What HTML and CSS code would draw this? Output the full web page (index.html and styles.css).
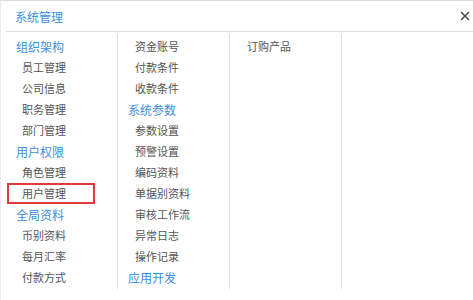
FILE: index.html
```html
<!DOCTYPE html>
<html lang="zh-CN">
<head>
    <meta charset="UTF-8">
    <meta name="viewport" content="width=device-width, initial-scale=1.0">
    <title>系统管理</title>
    <link rel="stylesheet" href="styles.css">
</head>
<body>
    <div class="dialog">
        <div class="dialog-header">
            <span class="dialog-title">系统管理</span>
            <span class="close" title="关闭">
                <svg width="10" height="10" viewBox="0 0 10 10">
                    <path d="M1 1 L9 9 M9 1 L1 9" stroke="#444" stroke-width="1.4" fill="none"/>
                </svg>
            </span>
        </div>

        <div class="menu">
            <div class="menu-col">
                <div class="group">组织架构</div>
                <a class="item">员工管理</a>
                <a class="item">公司信息</a>
                <a class="item">职务管理</a>
                <a class="item">部门管理</a>
                <div class="group">用户权限</div>
                <a class="item">角色管理</a>
                <a class="item marked">用户管理</a>
                <div class="group">全局资料</div>
                <a class="item">币别资料</a>
                <a class="item">每月汇率</a>
                <a class="item">付款方式</a>
            </div>
            <div class="menu-col">
                <a class="item">资金账号</a>
                <a class="item">付款条件</a>
                <a class="item">收款条件</a>
                <div class="group">系统参数</div>
                <a class="item">参数设置</a>
                <a class="item">预警设置</a>
                <a class="item">编码资料</a>
                <a class="item">单据别资料</a>
                <a class="item">审核工作流</a>
                <a class="item">异常日志</a>
                <a class="item">操作记录</a>
                <div class="group">应用开发</div>
            </div>
            <div class="menu-col">
                <a class="item">订购产品</a>
            </div>
            <div class="menu-col last"></div>
        </div>
    </div>
</body>
</html>
```

FILE: styles.css
```css
body {
    margin: 0;
    font-family: "Noto Sans CJK SC", "Noto Sans", sans-serif;
    font-size: 11px;
    color: #555;
    background: #fff;
}

.dialog {
    height: 299px;
    border-top: 1px solid #dcdcdc;
    border-left: 1px solid #ececec;
    background: #fff;
}

.dialog-header {
    display: flex;
    justify-content: space-between;
    align-items: center;
    height: 30px;
    margin-left: 5px;
    padding: 0 3px 0 9px;
    border-bottom: 1px solid #dedede;
}

.dialog-title {
    font-size: 12px;
    color: #3a8ee0;
}

.close {
    display: flex;
    cursor: pointer;
}

.menu {
    display: flex;
    padding: 2px 0 0 5px;
}

.menu-col {
    width: 111px;
    height: 253px;
    padding-top: 2px;
    border-right: 1px solid #e2e2e2;
}

.menu-col.last {
    border-right: none;
}

.group {
    line-height: 21px;
    padding-left: 10px;
    font-size: 12px;
    color: #3a8ee0;
}

.item {
    display: block;
    line-height: 21px;
    padding-left: 16px;
    cursor: pointer;
}

.menu-col + .menu-col .item {
    padding-left: 17px;
}

.item.marked {
    box-sizing: border-box;
    width: 88px;
    margin-left: 1px;
    padding-left: 15px;
    box-shadow: inset 0 0 0 2px #e3383d;
}
```
